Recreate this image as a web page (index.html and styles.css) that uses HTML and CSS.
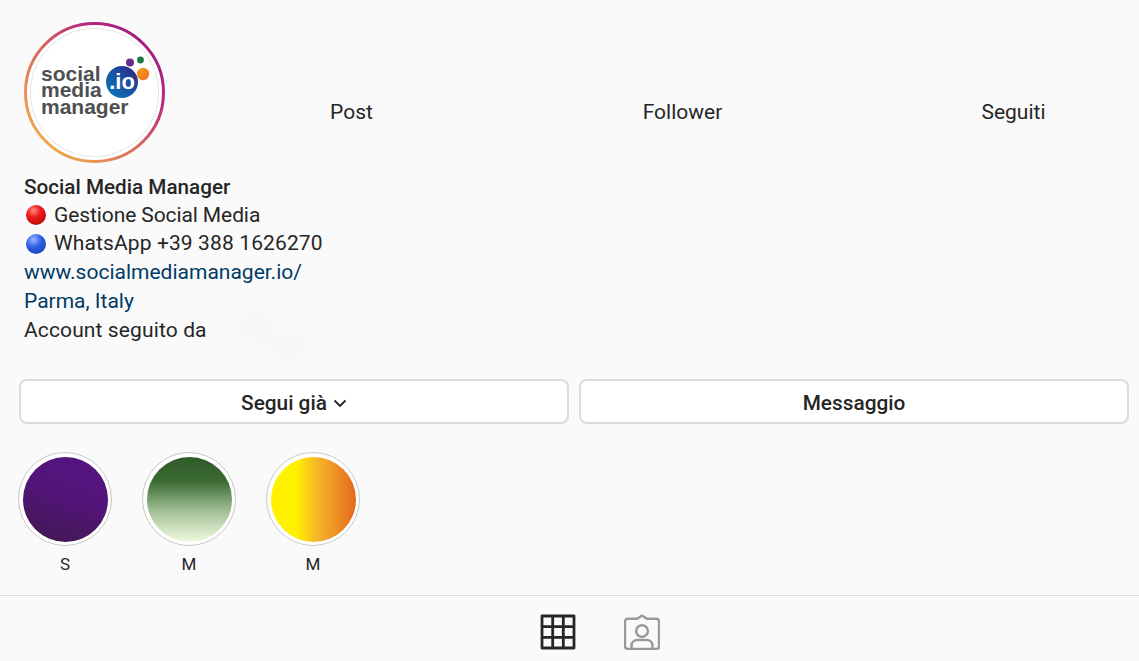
FILE: index.html
```html
<!DOCTYPE html>
<html lang="en">
<head>
    <meta charset="UTF-8">
    <meta name="viewport" content="width=device-width, initial-scale=1.0">
    <title>Social Media Manager</title>
    <link rel="stylesheet" href="styles.css">
</head>
<body>

    <!-- Avatar and counters -->
    <header class="profile-top">
        <svg class="avatar" width="141" height="141" viewBox="0 0 141 141">
            <defs>
                <linearGradient id="ring" x1="0.1" y1="0.9" x2="0.9" y2="0.1">
                    <stop offset="0" stop-color="#f2b04c"/>
                    <stop offset="0.45" stop-color="#d9695c"/>
                    <stop offset="0.75" stop-color="#b92a7e"/>
                    <stop offset="1" stop-color="#a01a80"/>
                </linearGradient>
                <linearGradient id="io" x1="0" y1="1" x2="1" y2="0">
                    <stop offset="0" stop-color="#0b7cc0"/>
                    <stop offset="0.6" stop-color="#1d4a9e"/>
                    <stop offset="1" stop-color="#38207e"/>
                </linearGradient>
                <linearGradient id="dot" x1="0" y1="0" x2="1" y2="1">
                    <stop offset="0" stop-color="#f7a21b"/>
                    <stop offset="1" stop-color="#ee6a24"/>
                </linearGradient>
            </defs>
            <circle cx="70.5" cy="70.5" r="69" fill="#fff" stroke="url(#ring)" stroke-width="3"/>
            <circle cx="70.5" cy="70.5" r="64" fill="none" stroke="#adadad" stroke-width="0.5" stroke-dasharray="2 1"/>
            <circle cx="98" cy="60" r="16" fill="url(#io)"/>
            <circle cx="106" cy="40.500" r="4" fill="#6a2a90"/>
            <circle cx="116.500" cy="38" r="3.400" fill="#1c7a45"/>
            <circle cx="119" cy="52" r="6.200" fill="url(#dot)"/>
            <text class="logo-io" x="98" y="67">.io</text>
            <text class="logo-text" x="17" y="59">social</text>
            <text class="logo-text" x="17" y="75">media</text>
            <text class="logo-text" x="17" y="92">manager</text>
        </svg>
        <div class="stats">
            <span>Post</span>
            <span>Follower</span>
            <span>Seguiti</span>
        </div>
    </header>

    <!-- Bio -->
    <section class="bio">
        <div class="bio-name">Social Media Manager</div>
        <div class="bio-line bio-tight"><i class="ball ball-red"></i>Gestione Social Media</div>
        <div class="bio-line bio-wide"><i class="ball ball-blue"></i>WhatsApp +39 388 1626270</div>
        <a class="bio-link" href="#">www.socialmediamanager.io/</a>
        <a class="bio-link" href="#">Parma, Italy</a>
        <div class="bio-followed bio-wide">Account seguito da<span class="smudge"></span></div>
    </section>

    <!-- Buttons -->
    <div class="actions">
        <button type="button" class="action-btn">Segui già
            <svg class="chevron" width="14" height="14" viewBox="0 0 14 14"><path d="M1.500 4.500l5.500 5.500 5.500-5.500" fill="none" stroke="#262626" stroke-width="1.900"/></svg>
        </button>
        <button type="button" class="action-btn">Messaggio</button>
    </div>

    <!-- Highlights -->
    <div class="highlights">
        <div class="highlight">
            <div class="highlight-ring"><div class="highlight-fill fill-purple"></div></div>
            <span>S</span>
        </div>
        <div class="highlight">
            <div class="highlight-ring"><div class="highlight-fill fill-green"></div></div>
            <span>M</span>
        </div>
        <div class="highlight">
            <div class="highlight-ring"><div class="highlight-fill fill-yellow"></div></div>
            <span>M</span>
        </div>
    </div>

    <!-- Tabs -->
    <nav class="tabs">
        <svg width="36" height="36" viewBox="0 0 36 36">
            <path d="M2 2h32v32H2zM12.700 2v32M23.300 2v32M2 12.700h32M2 23.300h32" fill="none" stroke="#262626" stroke-width="2.800" stroke-linejoin="round"/>
        </svg>
        <svg class="tab-tagged" width="36" height="36" viewBox="0 0 38 38">
            <path d="M4 5h10l5-3.500L24 5h10a3 3 0 0 1 3 3v26a3 3 0 0 1-3 3H4a3 3 0 0 1-3-3V8a3 3 0 0 1 3-3z" fill="none" stroke="#999" stroke-width="2.600" stroke-linejoin="round"/>
            <circle cx="19" cy="18" r="6.200" fill="none" stroke="#999" stroke-width="2.600"/>
            <path d="M8 36v-3c0-3.500 3-5.500 6-5.500h10c3 0 6 2 6 5.500v3" fill="none" stroke="#999" stroke-width="2.600"/>
        </svg>
    </nav>

</body>
</html>
```

FILE: styles.css
```css
* {
    box-sizing: border-box;
    margin: 0;
    padding: 0;
}

html, body {
    height: 100%;
    overflow: hidden;
}

body {
    background-color: #fafafa;
    color: #262626;
    font-family: Roboto, "Liberation Sans", sans-serif;
    font-size: 21px;
}

/* Avatar and counters */
.profile-top {
    display: flex;
    padding: 22px 0 0 24px;
}

.avatar {
    flex: none;
    display: block;
}

.logo-text {
    font-family: "Liberation Sans", sans-serif;
    font-weight: bold;
    font-size: 21px;
    fill: #4f4f51;
}

.logo-io {
    font-family: "Liberation Sans", sans-serif;
    font-weight: bold;
    font-size: 22px;
    fill: #fff;
    text-anchor: middle;
}

.stats {
    display: grid;
    grid-template-columns: repeat(3, 331px);
    flex: none;
    margin-left: 21px;
    padding-top: 78px;
    text-align: center;
    line-height: 24px;
}

/* Bio */
.bio {
    padding: 10px 0 0 24px;
    line-height: 28.700px;
}

.bio-name {
    margin-bottom: -1px;
    font-size: 20.700px;
    font-weight: 500;
}

.bio-line {
    display: flex;
    align-items: center;
}

.bio-tight {
    letter-spacing: -0.1px;
}

.bio-wide {
    letter-spacing: 0.12px;
}

.bio-link {
    display: block;
    color: #003a66;
    text-decoration: none;
}

.bio-followed {
    position: relative;
}

.ball {
    width: 20px;
    height: 20px;
    margin: 0 8px 0 2px;
    border-radius: 50%;
}

.ball-red {
    background: radial-gradient(circle at 38% 28%, #ff8a80 0, #ee1c1c 35%, #b00a0a 85%);
}

.ball-blue {
    background: radial-gradient(circle at 38% 28%, #9db8ff 0, #2e5fe8 40%, #1c3cb5 90%);
}

.smudge {
    position: absolute;
    left: 195px;
    top: -12px;
    width: 120px;
    height: 60px;
    background:
        radial-gradient(ellipse 30px 24px at 32% 38%, #f5f5f7, transparent),
        radial-gradient(ellipse 34px 18px at 59% 73%, #f5f5f7, transparent);
}

/* Buttons */
.actions {
    display: flex;
    gap: 10px;
    padding: 35px 10px 0 19px;
}

.action-btn {
    flex: 1;
    display: flex;
    align-items: center;
    justify-content: center;
    gap: 6px;
    height: 45px;
    padding-top: 2px;
    background-color: #fff;
    border: 2px solid #dbdbdb;
    border-radius: 8px;
    color: #262626;
    font-family: Roboto, "Liberation Sans", sans-serif;
    font-size: 20.800px;
    font-weight: 500;
}

/* Highlights */
.highlights {
    display: flex;
    gap: 30px;
    padding: 28px 0 0 18px;
}

.highlight {
    display: flex;
    flex-direction: column;
    align-items: center;
    gap: 9px;
    font-size: 17px;
    line-height: 19px;
}

.highlight-ring {
    width: 94px;
    height: 94px;
    padding: 3.500px;
    background-color: #fff;
    border: 1.500px solid #c9c9c9;
    border-radius: 50%;
}

.highlight-fill {
    width: 100%;
    height: 100%;
    border-radius: 50%;
}

.fill-purple {
    background: linear-gradient(200deg, #551480 0, #53147a 45%, #3f1a4d 100%);
}

.fill-green {
    background: linear-gradient(180deg, #2f5a28 0, #3a6a32 28%, #a5c299 65%, #effadf 100%);
}

.fill-yellow {
    background: linear-gradient(90deg, #fff200 0, #fff000 30%, #f5b52a 55%, #e5681e 100%);
}

/* Tabs */
.tabs {
    display: flex;
    justify-content: center;
    gap: 48px;
    margin-top: 21px;
    padding: 18px 0 0 60px;
    border-top: 1px solid #dbdbdb;
}
```
